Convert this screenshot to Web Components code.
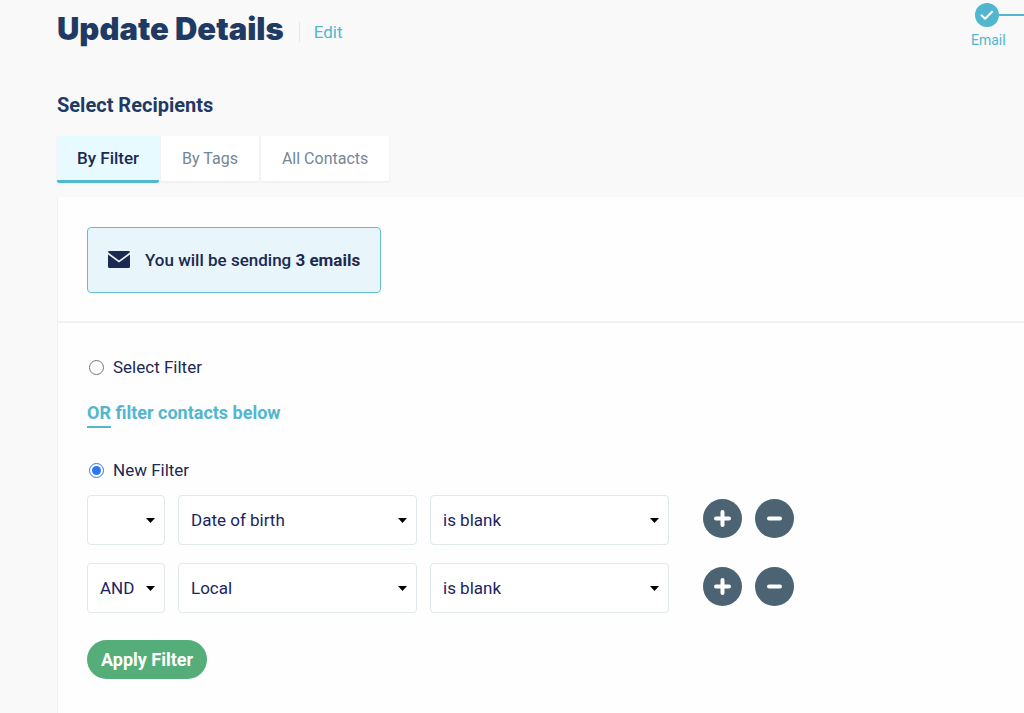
<!DOCTYPE html>
<html lang="en">
<head>
<meta charset="utf-8">
<meta name="viewport" content="width=device-width, initial-scale=1">
<title>Update Details</title>
<style>
    html {
        --navy: #1f3a63;
        --ink: #1c2951;
        --teal: #52b6cf;
        --line: #e0e8ea;
        --slate: #4b6373;
        background: #f9f9f9;
    }
    body {
        margin: 0;
        min-height: 100vh;
        display: flex;
        font: 17px/24px Roboto, "Liberation Sans", sans-serif;
        color: var(--ink);
    }
    update-page {
        flex: 1;
    }
</style>
</head>
<body>
<update-page></update-page>

<template id="page-header-template">
    <style>
        :host {
            display: flex;
            justify-content: space-between;
            height: 48px;
        }
        .heading {
            display: flex;
            align-items: flex-start;
            padding-top: 9px;
        }
        h1 {
            margin: 0;
            font: 900 31px/40px Inter, Roboto, sans-serif;
            color: var(--navy);
        }
        a {
            margin: 13px 0 0 15px;
            padding-left: 14px;
            border-left: 1px solid var(--line);
            line-height: 20px;
            color: var(--teal);
            text-decoration: none;
        }
    </style>
    <div class="heading">
        <h1><slot></slot></h1>
        <a href="#edit">Edit</a>
    </div>
    <slot name="steps"></slot>
</template>

<template id="progress-step-template">
    <style>
        :host {
            display: block;
            width: 53px;
            padding-top: 3px;
            color: var(--teal);
            font-size: 14px;
            line-height: 20px;
        }
        .track {
            display: flex;
            align-items: center;
            padding-left: 4px;
        }
        svg {
            flex: none;
        }
        .line {
            flex: 1;
            height: 2px;
            background: var(--teal);
        }
        .label {
            display: block;
            padding-top: 3px;
        }
    </style>
    <div class="track">
        <svg width="24" height="24" viewBox="0 0 24 24" aria-hidden="true">
            <circle cx="12" cy="12" r="12" fill="#52b6cf"/>
            <path d="M6.5 12.2l3.6 3.5 7-7" fill="none" stroke="#fff" stroke-width="2" stroke-linecap="round" stroke-linejoin="round"/>
        </svg>
        <span class="line"></span>
    </div>
    <span class="label"><slot></slot></span>
</template>

<template id="recipient-tab-template">
    <style>
        :host {
            display: block;
        }
        button {
            display: block;
            height: 45px;
            padding: 0 21px;
            border: 0;
            background: #fff;
            box-shadow: 0 1px 2px rgba(30, 60, 80, 0.08);
            font: inherit;
            font-size: 16px;
            color: #748695;
            cursor: pointer;
        }
        :host([selected]) button {
            height: 47px;
            padding: 0 20px;
            border-bottom: 3px solid var(--teal);
            border-radius: 2px;
            background: #e7faff;
            font-size: 17px;
            font-weight: 500;
            color: var(--ink);
        }
    </style>
    <button type="button" role="tab"><slot></slot></button>
</template>

<template id="send-notice-template">
    <style>
        :host {
            display: inline-flex;
            align-items: center;
            box-sizing: border-box;
            height: 66px;
            padding: 0 20px;
            gap: 15px;
            border: 1px solid #62bdd0;
            border-radius: 4px;
            background: #e8f6fb;
            font-weight: 500;
        }
        svg {
            padding-bottom: 2px;
        }
    </style>
    <svg width="22" height="17" viewBox="0 0 22 17" aria-hidden="true">
        <path fill="#1c2951" d="M1.5 0h19Q22 0 22 1.3L11 9.6 0 1.3Q0 0 1.5 0zM0 3.400l11 8.2 11-8.2V15.500Q22 17 20.500 17h-19Q0 17 0 15.500z"/>
    </svg>
    <span><slot></slot></span>
</template>

<template id="drop-down-template">
    <style>
        :host {
            display: grid;
            align-items: center;
            width: 239px;
        }
        :host([compact]) {
            width: 78px;
        }
        select, svg {
            grid-area: 1 / 1;
        }
        select {
            appearance: none;
            width: 100%;
            height: 50px;
            margin: 0;
            padding: 0 24px 0 12px;
            border: 1px solid var(--line);
            border-radius: 4px;
            background: #fff;
            font: inherit;
            color: #1b2463;
        }
        svg {
            justify-self: end;
            margin-right: 10px;
            pointer-events: none;
        }
    </style>
    <select></select>
    <svg width="9" height="5" viewBox="0 0 9 5" aria-hidden="true"><path d="M0 0h9L4.500 5z"/></svg>
</template>

<template id="round-button-template">
    <style>
        :host {
            display: block;
        }
        button {
            display: block;
            width: 39px;
            height: 39px;
            padding: 0;
            border: 0;
            border-radius: 50%;
            background: var(--slate);
            cursor: pointer;
        }
        svg {
            display: block;
            margin: auto;
        }
        path {
            fill: none;
            stroke: #fff;
            stroke-width: 4;
            stroke-linecap: round;
        }
    </style>
    <button type="button"><svg width="19" height="19" viewBox="0 0 19 19" aria-hidden="true"><path/></svg></button>
</template>

<template id="filter-row-template">
    <style>
        :host {
            display: flex;
            align-items: center;
            gap: 13px;
        }
        .actions {
            display: flex;
            gap: 13px;
            margin-left: 21px;
            padding-bottom: 3px;
        }
    </style>
    <drop-down compact class="join" label="Join"></drop-down>
    <drop-down class="field" label="Field"></drop-down>
    <drop-down class="test" label="Condition"></drop-down>
    <div class="actions">
        <round-button icon="plus" label="Add filter"></round-button>
        <round-button icon="minus" label="Remove filter"></round-button>
    </div>
</template>

<template id="filter-form-template">
    <style>
        :host {
            display: block;
            padding: 32px 29px;
        }
        .choice {
            display: flex;
            align-items: center;
            gap: 9px;
        }
        input {
            width: 15px;
            height: 15px;
            margin: 0 0 0 2px;
            accent-color: #2f74f5;
        }
        .alternative {
            margin: 22px 0 30px;
            font-size: 18px;
            font-weight: 700;
            color: var(--teal);
        }
        .alternative span {
            display: inline-block;
            padding-bottom: 1px;
            border-bottom: 2px solid var(--teal);
        }
        .rows {
            display: grid;
            gap: 18px;
            margin: 13px 0 27px;
        }
        .apply {
            height: 39px;
            padding: 0 14px;
            border: 0;
            border-radius: 20px;
            background: #55ad79;
            font: inherit;
            font-size: 18px;
            font-weight: 700;
            color: #fff;
            cursor: pointer;
        }
    </style>
    <form>
        <div class="choice">
            <input type="radio" name="filter" id="saved">
            <label for="saved">Select Filter</label>
        </div>
        <div class="alternative"><span>OR</span> filter contacts below</div>
        <div class="choice">
            <input type="radio" name="filter" id="new" checked>
            <label for="new">New Filter</label>
        </div>
        <div class="rows">
            <filter-row join="" field="Date of birth" test="is blank"></filter-row>
            <filter-row join="AND" field="Local" test="is blank"></filter-row>
        </div>
        <button type="button" class="apply">Apply Filter</button>
    </form>
</template>

<template id="update-page-template">
    <style>
        :host {
            display: flex;
            flex-direction: column;
            padding-left: 57px;
        }
        h2 {
            margin: 45px 0 19px;
            font-size: 20px;
            line-height: 24px;
            font-weight: 700;
            color: var(--navy);
        }
        .tabs {
            display: flex;
            gap: 2px;
            height: 47px;
            margin-bottom: 14px;
        }
        .panel {
            flex: 1;
            border-left: 1px solid #edf2f3;
            background: #fefefe;
        }
        .summary {
            display: flex;
            padding: 30px 29px 28px;
            border-bottom: 2px solid #edf2f3;
        }
    </style>
    <page-header>Update Details<progress-step slot="steps">Email</progress-step></page-header>
    <h2>Select Recipients</h2>
    <div class="tabs" role="tablist">
        <recipient-tab selected>By Filter</recipient-tab>
        <recipient-tab>By Tags</recipient-tab>
        <recipient-tab>All Contacts</recipient-tab>
    </div>
    <div class="panel">
        <div class="summary">
            <send-notice>You will be sending <b>3 emails</b></send-notice>
        </div>
        <filter-form></filter-form>
    </div>
</template>

<script>
class BaseElement extends HTMLElement {

    constructor() {
        super();
        const template = document.getElementById(this.localName + '-template');
        this.attachShadow({ mode: 'open' });
        this.shadowRoot.appendChild(template.content.cloneNode(true));
    }

}

class PageHeader extends BaseElement {}
class ProgressStep extends BaseElement {}
class SendNotice extends BaseElement {}
class FilterForm extends BaseElement {}
class UpdatePage extends BaseElement {}

class RecipientTab extends BaseElement {

    connectedCallback() {
        const button = this.shadowRoot.querySelector('button');
        button.setAttribute('aria-selected', this.hasAttribute('selected'));
        button.addEventListener('click', () => {
            for (const tab of this.parentNode.children) {
                tab.toggleAttribute('selected', tab === this);
                tab.shadowRoot.querySelector('button').setAttribute('aria-selected', tab === this);
            }
        });
    }

}

class DropDown extends BaseElement {

    static observedAttributes = ['value', 'label'];

    attributeChangedCallback(name, oldValue, newValue) {
        const select = this.shadowRoot.querySelector('select');
        if (name === 'label') {
            select.setAttribute('aria-label', newValue);
        } else {
            select.replaceChildren(new Option(newValue, newValue));
        }
    }

}

class RoundButton extends BaseElement {

    connectedCallback() {
        const minus = this.getAttribute('icon') === 'minus';
        this.shadowRoot.querySelector('button').setAttribute('aria-label', this.getAttribute('label'));
        this.shadowRoot.querySelector('path').setAttribute('d', minus ? 'M4 9.5h11' : 'M3 9.5h13M9.5 3v13');
    }

}

class FilterRow extends BaseElement {

    connectedCallback() {
        for (const name of ['join', 'field', 'test']) {
            this.shadowRoot.querySelector('.' + name).setAttribute('value', this.getAttribute(name));
        }
    }

}

customElements.define('drop-down', DropDown);
customElements.define('round-button', RoundButton);
customElements.define('filter-row', FilterRow);
customElements.define('filter-form', FilterForm);
customElements.define('send-notice', SendNotice);
customElements.define('recipient-tab', RecipientTab);
customElements.define('progress-step', ProgressStep);
customElements.define('page-header', PageHeader);
customElements.define('update-page', UpdatePage);
</script>
</body>
</html>
